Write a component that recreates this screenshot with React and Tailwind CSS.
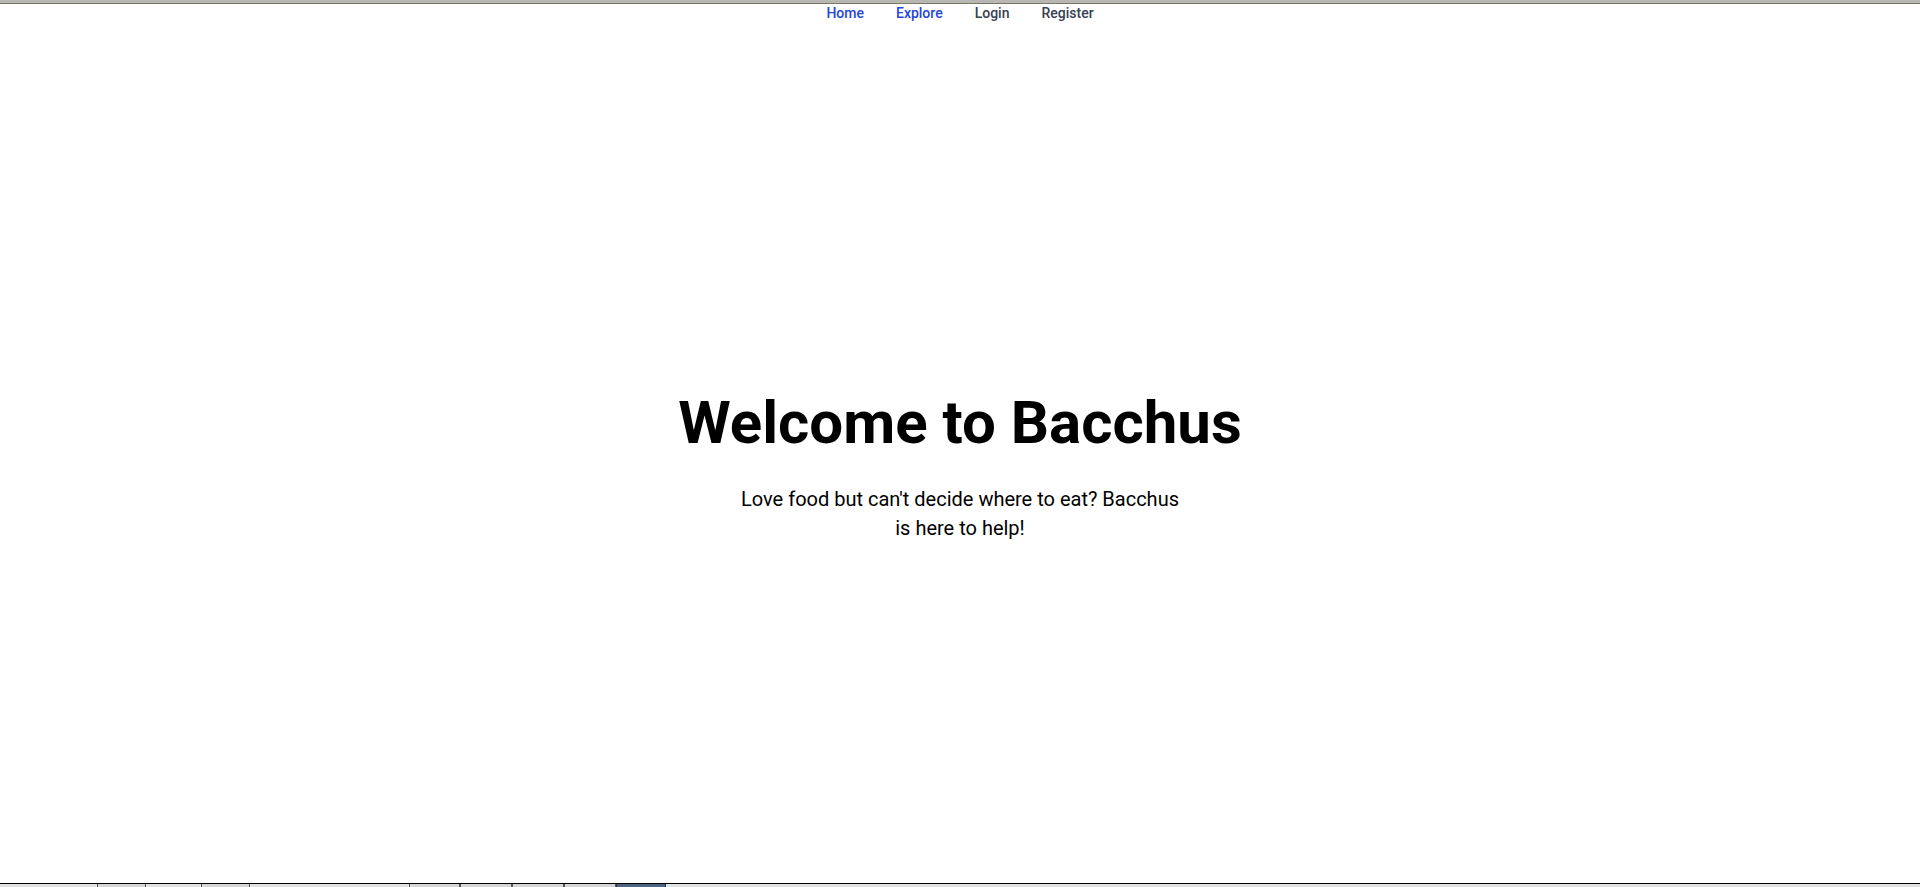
import React from "react";

const navLinks = [
  { label: "Home", active: true },
  { label: "Explore", active: true },
  { label: "Login", active: false },
  { label: "Register", active: false },
];

// bottom strip: [width, kind]
const strip = [
  [97, "gap"],
  [49, "tab"],
  [55, "gap"],
  [49, "tab"],
  [159, "gap"],
  [51, "tab"],
  [52, "tab"],
  [52, "tab"],
  [52, "tab"],
  [50, "active"],
];

const App = () => {
  return (
    <div
      className="h-screen w-full bg-white flex flex-col overflow-hidden"
      style={{ fontFamily: "Roboto, 'Liberation Sans', sans-serif" }}
    >
      <div className="h-[3px] w-full bg-[#b8b6b0]" />
      <div className="h-px w-full bg-[#7b7a68]" />

      <nav className="flex justify-center pt-[1px]">
        <ul className="flex items-center">
          {navLinks.map((link) => (
            <li key={link.label}>
              <a
                href="#"
                className={`block px-4 text-[14px] leading-[17px] font-medium ${
                  link.active ? "text-[#2447d8]" : "text-[#374151]"
                }`}
              >
                {link.label}
              </a>
            </li>
          ))}
        </ul>
      </nav>

      <main className="flex-1 flex flex-col items-center pt-[371px] text-center text-black">
        <h1 className="text-[60px] leading-[60px] font-bold">
          Welcome to Bacchus
        </h1>
        <p className="mt-[32px] max-w-[448px] text-[20px] leading-[29px]">
          Love food but can't decide where to eat? Bacchus is here to help!
        </p>
      </main>

      <div className="w-full border-t border-black bg-[#e2e2e2] h-[4px] flex">
        {strip.map(([w, kind], i) => (
          <div
            key={i}
            style={{ width: w }}
            className={
              kind === "tab"
                ? "h-full border-x border-[#555] bg-[#d6d6d6]"
                : kind === "active"
                ? "h-full border-x border-[#333] bg-[#4d6480]"
                : "h-full"
            }
          />
        ))}
      </div>
    </div>
  );
};

export default App;
